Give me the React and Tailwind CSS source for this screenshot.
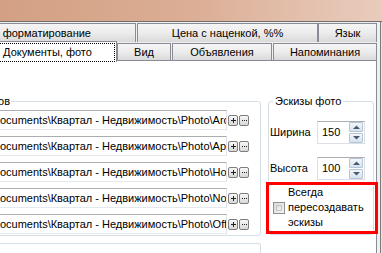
import React from "react";

const tabBase =
  "flex items-center justify-center whitespace-nowrap border-t border-l border-r border-[#898c95] bg-gradient-to-b from-[#f5f5f5] via-[#ececec] to-[#d9d9d9] leading-none";

function SmallBtn({ children }) {
  return (
    <div className="w-[10px] h-[11px] rounded-[2px] border border-[#7d7d7d] bg-gradient-to-b from-[#f7f7f7] to-[#d8d8d8] flex items-center justify-center">
      {children}
    </div>
  );
}

const Plus = () => (
  <svg width="5" height="5" viewBox="0 0 5 5">
    <rect x="2" y="0" width="1" height="5" fill="#202020" />
    <rect x="0" y="2" width="5" height="1" fill="#202020" />
  </svg>
);

const Dots = () => (
  <svg width="5" height="1" viewBox="0 0 5 1">
    <rect x="0" y="0" width="1" height="1" fill="#202020" />
    <rect x="2" y="0" width="1" height="1" fill="#202020" />
    <rect x="4" y="0" width="1" height="1" fill="#202020" />
  </svg>
);

function Spin() {
  return (
    <div className="flex flex-col gap-[1px] w-[14px] mr-[1px]">
      <div className="h-[10px] rounded-[1px] border border-[#b7c4d3] bg-gradient-to-b from-[#f2f6fb] to-[#d6e2ef] flex items-center justify-center">
        <svg width="7" height="4" viewBox="0 0 7 4">
          <path d="M0 4 L3.5 0.5 L7 4 Z" fill="#4a5a6e" />
        </svg>
      </div>
      <div className="h-[10px] rounded-[1px] border border-[#b7c4d3] bg-gradient-to-b from-[#f2f6fb] to-[#d6e2ef] flex items-center justify-center">
        <svg width="7" height="4" viewBox="0 0 7 4">
          <path d="M0 0 L3.5 3.5 L7 0 Z" fill="#4a5a6e" />
        </svg>
      </div>
    </div>
  );
}

function NumBox({ value }) {
  return (
    <div className="w-[48px] h-[23px] flex items-center justify-between border border-[#dbdfe6] border-t-[#abadb3] bg-white">
      <span className="pl-[4px] leading-none">{value}</span>
      <Spin />
    </div>
  );
}

const folders = ["Archive", "Apartments", "Houses", "NonResidential", "Office"];

export default function App() {
  return (
    <div className="relative w-[382px] h-[253px] overflow-hidden bg-gradient-to-r from-[#d3a083] via-[#dbae95] to-[#e9ccbd] font-['Liberation_Sans',sans-serif] text-[11px] text-black">
      <div className="h-[21px]" />
      <div className="flex h-[232px] border-t border-[#6f6f6f] bg-[#f0f0f0]">
        <div className="w-[377px] flex flex-col pt-[1px]">
          {/* tab row 1 */}
          <div className="flex h-[19px] ml-[-80px]">
            <div className="flex items-center justify-end pr-[44px] whitespace-nowrap border-t border-l border-r border-[#898c95] bg-gradient-to-b from-[#f5f5f5] via-[#ececec] to-[#d9d9d9] leading-none w-[216px] shrink-0">
              Ввод и форматирование
            </div>
            <div className={tabBase + " w-[181px] ml-[1px] shrink-0"}>Цена с наценкой, %%</div>
            <div className={tabBase + " w-[59px] shrink-0"}>Язык</div>
          </div>
          {/* tab row 2 */}
          <div className="flex h-[18px] ml-[-22px] items-start">
            <div className="relative z-10 w-[139px] h-[21px] mt-[-1px] shrink-0 border-t border-l border-r border-[#898c95] bg-white pt-[1px] pl-[1px] pr-[1px]">
              <div className="h-[19px] border border-dotted border-black flex items-center justify-center whitespace-nowrap leading-none">
                Документы, фото
              </div>
            </div>
            <div className={tabBase + " w-[54px] h-[17px] mt-[1px] shrink-0"}>Вид</div>
            <div className={tabBase + " w-[100px] h-[17px] mt-[1px] ml-[1px] shrink-0"}>Объявления</div>
            <div className={tabBase + " w-[104px] h-[17px] mt-[1px] ml-[1px] shrink-0"}>Напоминания</div>
          </div>
          {/* panel */}
          <div className="ml-[-150px] w-[527px] h-[193px] shrink-0 border-t border-l border-r border-[#898c95] bg-white flex pl-[9px] gap-[7px]">
            {/* left column */}
            <div className="w-[401px] shrink-0 flex flex-col">
              <fieldset className="mt-[34px] border border-[#d5dfe5] rounded-[3px] pb-[1px]">
                <legend className="ml-[2px]">
                  <div className="w-[148px] text-right pr-[1px] leading-[13px] whitespace-nowrap">
                    Папки для фото объектов
                  </div>
                </legend>
                <div className="flex flex-col gap-[6px] pt-[2px] pl-[9px]">
                  {folders.map((f) => (
                    <div key={f} className="flex items-center">
                      <div className="w-[357px] h-[20px] border border-[#e2e3ea] border-t-[#abadb3] border-b-[#e3e9ef] bg-white overflow-hidden whitespace-nowrap flex items-center pl-[121px] leading-none">
                        {"Documents\\Квартал - Недвижимость\\Photo\\" + f}
                      </div>
                      <div className="ml-[1px] flex gap-[1px]">
                        <SmallBtn>
                          <Plus />
                        </SmallBtn>
                        <SmallBtn>
                          <Dots />
                        </SmallBtn>
                      </div>
                    </div>
                  ))}
                </div>
              </fieldset>
              <div className="mt-[7px] h-[40px] border-t border-r border-[#d5dfe5] rounded-tr-[3px]" />
            </div>
            {/* right column */}
            <div className="w-[106px] shrink-0">
              <fieldset className="mt-[34px] border border-[#d5dfe5] rounded-[3px] pb-[4px]">
                <legend className="ml-[4px] px-[2px] leading-[13px] whitespace-nowrap">Эскизы фото</legend>
                <div className="pt-[13px] pl-[1px] flex flex-col">
                  <div className="flex items-center">
                    <span className="w-[47px] leading-none">Ширина</span>
                    <NumBox value="150" />
                  </div>
                  <div className="flex items-center mt-[13px]">
                    <span className="w-[47px] leading-none">Высота</span>
                    <NumBox value="100" />
                  </div>
                  <div className="flex items-center mt-[5px] pl-[3px]">
                    <div className="w-[12px] h-[12px] border border-[#8e8f8f] bg-gradient-to-br from-[#d9d9d9] to-[#f7f7f7] p-[2px]">
                      <div className="w-full h-full border border-[#c4c4c4] bg-gradient-to-br from-[#dcdcdc] to-[#f3f3f3]" />
                    </div>
                    <div className="ml-[3px] leading-[15px]">
                      Всегда
                      <br />
                      пересоздавать
                      <br />
                      эскизы
                    </div>
                  </div>
                </div>
              </fieldset>
            </div>
          </div>
        </div>
        <div className="w-[3px] shrink-0" />
        <div className="w-[1px] shrink-0 bg-[#7a7a7a]" />
        <div className="w-[1px] shrink-0 bg-[#e3e3e3]" />
      </div>
      <div className="absolute left-[266px] top-[182px] w-[112px] h-[52px] border-[3px] border-[#ff0000]" />
    </div>
  );
}
